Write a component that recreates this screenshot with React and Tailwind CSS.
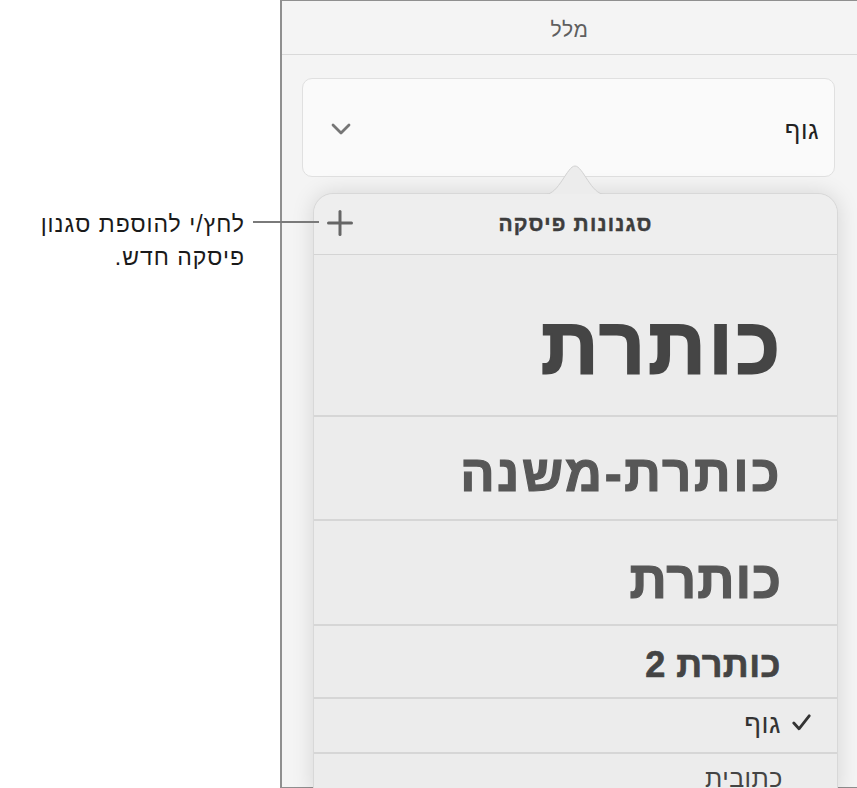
import React from "react";

const font = { fontFamily: '"Liberation Sans", "DejaVu Sans", "Noto Sans", sans-serif' };

export default function App() {
  return (
    <div className="relative flex w-[857px] h-[788px] bg-white overflow-hidden" style={font}>
      {/* Callout */}
      <div className="relative w-[280px] shrink-0">
        <div dir="rtl" className="absolute top-[208px] right-[35px] text-right text-[23px] tracking-[1px] leading-[33px] text-[#1a1a1a] whitespace-nowrap">
          <div>לחץ/י להוספת סגנון</div>
          <div>פיסקה חדש.</div>
        </div>
      </div>

      {/* Panel */}
      <div className="relative flex-1 h-[788px] border-l-2 border-t border-b border-[#8f8f8f] bg-[#f4f4f4] flex flex-col">
        <div className="h-[54px] shrink-0 border-b border-[#d9d9d9] flex items-center justify-center pt-[4px]">
          <span dir="rtl" className="text-[21px] tracking-[0.5px] text-[#5f5f5f]">מלל</span>
        </div>

        {/* Select box */}
        <div className="mt-[23px] ml-[20px] mr-[22px] h-[99px] shrink-0 rounded-[10px] border border-[#e0e0e0] bg-[#fafafa] flex items-center justify-between pl-[27px] pr-[15px]">
          <svg width="22" height="14" viewBox="0 0 22 14" className="mt-[2px]">
            <polyline points="3,3 11,11 19,3" fill="none" stroke="#767676" strokeWidth="2.8" strokeLinecap="round" strokeLinejoin="round" />
          </svg>
          <span dir="rtl" className="text-[25px] tracking-[0.5px] text-[#222] leading-none pt-[6px]">גוף</span>
        </div>

        {/* Popover */}
        <div className="relative mt-[16px] ml-[31px] mr-[19px] flex-1 rounded-t-[20px] border border-[#d8d8d8] bg-[#ececec] shadow-[0_0_22px_rgba(0,0,0,0.13)]">
          <svg className="absolute left-[231px] top-[-29px]" width="60" height="30" viewBox="0 0 60 30">
            <path d="M0 29.5 C 14 29.5, 22 1, 30 1 C 38 1, 46 29.5, 60 29.5" fill="#ececec" stroke="#d2d2d2" strokeWidth="1" />
            <rect x="0" y="29" width="60" height="2" fill="#ececec" />
          </svg>
          <div className="relative h-[61px] border-b border-[#d4d4d4] flex items-center justify-center bg-[#eeeeee] rounded-t-[20px]">
            <svg className="absolute left-[13px] top-[16px]" width="26" height="26" viewBox="0 0 26 26">
              <line x1="1.5" y1="13" x2="24.5" y2="13" stroke="#666" strokeWidth="3" strokeLinecap="round" />
              <line x1="13" y1="1.5" x2="13" y2="24.5" stroke="#666" strokeWidth="3" strokeLinecap="round" />
            </svg>
            <span dir="rtl" className="text-[21px] tracking-[1.2px] font-bold text-[#3d3d3d] [-webkit-text-stroke:0.4px_#3d3d3d]">סגנונות פיסקה</span>
          </div>
          <div className="h-[162px] border-b-2 border-[#d6d6d6] flex items-center justify-end pr-[54px] pt-[22px]">
            <span dir="rtl" className="text-[80px] tracking-[3px] font-bold text-[#454545] leading-none [-webkit-text-stroke:2px_#454545]">כותרת</span>
          </div>
          <div className="h-[104px] border-b-2 border-[#d6d6d6] flex items-center justify-end pr-[55px] pt-[10px]">
            <span dir="rtl" className="text-[51px] tracking-[2.6px] font-bold text-[#575757] leading-none [-webkit-text-stroke:1.2px_#575757]">כותרת-משנה</span>
          </div>
          <div className="h-[105px] border-b-2 border-[#d6d6d6] flex items-center justify-end pr-[55px] pt-[14px]">
            <span dir="rtl" className="text-[52px] tracking-[1px] font-bold text-[#575757] leading-none [-webkit-text-stroke:1.2px_#575757]">כותרת</span>
          </div>
          <div className="h-[73px] border-b-2 border-[#d6d6d6] flex items-center justify-end pr-[56px] pt-[6px]">
            <span dir="rtl" className="text-[36px] tracking-[0.5px] font-bold text-[#444] leading-none [-webkit-text-stroke:0.7px_#444]">כותרת 2</span>
          </div>
          <div className="h-[55px] border-b-2 border-[#d6d6d6] flex items-center justify-end pr-[26px] gap-[11px] pb-[2px]">
            <span dir="rtl" className="text-[27px] tracking-[0.5px] text-[#333] leading-none">גוף</span>
            <svg width="19" height="17" viewBox="0 0 19 17" className="mb-[4px]">
              <polyline points="1.8,9 7,14.8 17.2,1.8" fill="none" stroke="#333" strokeWidth="2.8" strokeLinecap="round" strokeLinejoin="round" />
            </svg>
          </div>
          <div className="h-[40px] flex items-start justify-end pr-[54px] pt-[12px]">
            <span dir="rtl" className="text-[25px] tracking-[0.5px] text-[#444] leading-none">כתובית</span>
          </div>
        </div>
      </div>

      {/* Callout line */}
      <div className="absolute left-[253px] top-[221px] w-[66px] h-[2px] bg-[#7a7a7a]" />
    </div>
  );
}
